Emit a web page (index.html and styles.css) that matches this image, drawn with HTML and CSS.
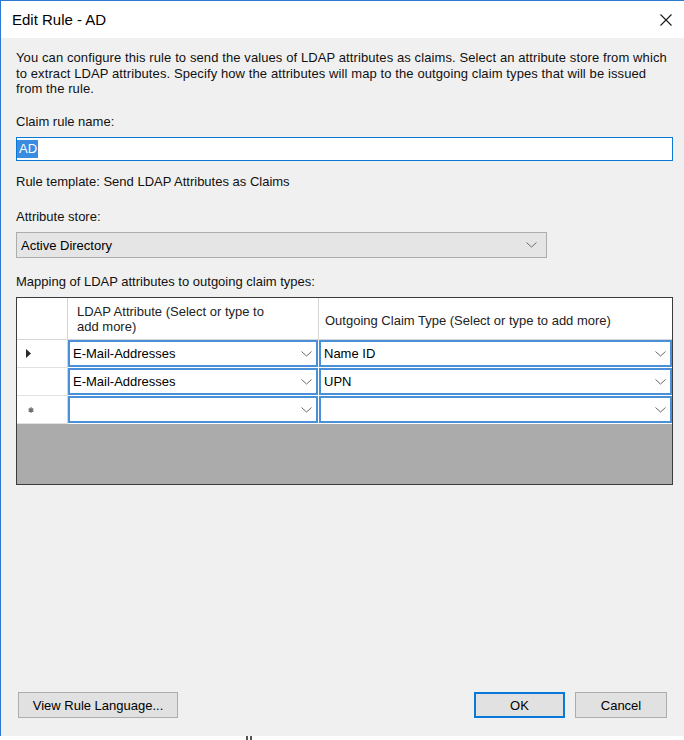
FILE: index.html
```html
<!DOCTYPE html>
<html>
<head>
<meta charset="utf-8">
<title>Edit Rule - AD</title>
<link rel="stylesheet" href="styles.css">
</head>
<body>
<div class="window">
  <div class="titlebar">
    <span class="title">Edit Rule - AD</span>
    <svg class="close" width="12" height="12" viewBox="0 0 12 12"><path d="M0.5 0.5 L11.5 11.5 M11.5 0.5 L0.5 11.5" stroke="#1a1a1a" stroke-width="1.1" fill="none"/></svg>
  </div>
  <div class="content">
    <p class="desc">You can configure this rule to send the values of LDAP attributes as claims. Select an attribute store from which<br>to extract LDAP attributes. Specify how the attributes will map to the outgoing claim types that will be issued<br>from the rule.</p>
    <div class="label l-name">Claim rule name:</div>
    <div class="textbox"><span class="sel">AD</span></div>
    <div class="label l-template">Rule template: Send LDAP Attributes as Claims</div>
    <div class="label l-store">Attribute store:</div>
    <div class="combo">
      <span class="combo-text">Active Directory</span>
      <svg class="chev" width="11" height="6" viewBox="0 0 11 6"><polyline points="0.5,0.5 5.5,5 10.5,0.5" stroke="#6a6a6a" stroke-width="1" fill="none"/></svg>
    </div>
    <div class="label l-map">Mapping of LDAP attributes to outgoing claim types:</div>
    <div class="grid">
      <div class="grid-head">
        <div class="rh"></div>
        <div class="ch ch1">LDAP Attribute (Select or type to<br>add more)</div>
        <div class="ch ch2">Outgoing Claim Type (Select or type to add more)</div>
      </div>
      <div class="grid-row">
        <div class="rh"><svg width="5" height="9" viewBox="0 0 5 9"><polygon points="0,0 5,4.5 0,9" fill="#2a2a2a"/></svg></div>
        <div class="cell c1"><span>E-Mail-Addresses</span><svg class="chev" width="11" height="6" viewBox="0 0 11 6"><polyline points="0.5,0.5 5.5,5 10.5,0.5" stroke="#6a6a6a" stroke-width="1" fill="none"/></svg></div>
        <div class="cell c2"><span>Name ID</span><svg class="chev" width="11" height="6" viewBox="0 0 11 6"><polyline points="0.5,0.5 5.5,5 10.5,0.5" stroke="#6a6a6a" stroke-width="1" fill="none"/></svg></div>
      </div>
      <div class="grid-row">
        <div class="rh"></div>
        <div class="cell c1"><span>E-Mail-Addresses</span><svg class="chev" width="11" height="6" viewBox="0 0 11 6"><polyline points="0.5,0.5 5.5,5 10.5,0.5" stroke="#6a6a6a" stroke-width="1" fill="none"/></svg></div>
        <div class="cell c2"><span>UPN</span><svg class="chev" width="11" height="6" viewBox="0 0 11 6"><polyline points="0.5,0.5 5.5,5 10.5,0.5" stroke="#6a6a6a" stroke-width="1" fill="none"/></svg></div>
      </div>
      <div class="grid-row">
        <div class="rh rh-new"><svg width="6" height="6" viewBox="0 0 6 6"><path d="M3 0.3 V5.7 M0.6 1.6 L5.4 4.4 M5.4 1.6 L0.6 4.4" stroke="#6e6e6e" stroke-width="1.4" fill="none"/></svg></div>
        <div class="cell c1"><span></span><svg class="chev" width="11" height="6" viewBox="0 0 11 6"><polyline points="0.5,0.5 5.5,5 10.5,0.5" stroke="#6a6a6a" stroke-width="1" fill="none"/></svg></div>
        <div class="cell c2"><span></span><svg class="chev" width="11" height="6" viewBox="0 0 11 6"><polyline points="0.5,0.5 5.5,5 10.5,0.5" stroke="#6a6a6a" stroke-width="1" fill="none"/></svg></div>
      </div>
    </div>
    <div class="footer">
      <button class="btn btn-view">View Rule Language...</button>
      <div class="spacer"></div>
      <button class="btn btn-ok">OK</button>
      <button class="btn btn-cancel">Cancel</button>
    </div>
  </div>
</div>
<div class="strip"><span class="mark"></span></div>
</body>
</html>
```

FILE: styles.css
```css
html, body {
  margin: 0;
  padding: 0;
  background: #ffffff;
}
body {
  width: 684px;
  height: 740px;
  overflow: hidden;
  font-family: "Liberation Sans", Arial, sans-serif;
  font-size: 13px;
  color: #000;
}
.window {
  height: 736px;
  box-sizing: border-box;
  border-top: 1px solid #2b7ad0;
  border-left: 1px solid #2b7ad0;
  display: flex;
  flex-direction: column;
}
.titlebar {
  flex: none;
  height: 37px;
  background: #fff;
  display: flex;
  align-items: center;
  padding: 0 12px 0 11px;
}
.title {
  flex: 1;
  font-size: 15px;
  color: #000;
  padding-bottom: 1px;
}
.close {
  display: block;
}
.content {
  flex: 1;
  background: #f0f0f0;
  padding: 12px 11px 18px 15px;
  display: flex;
  flex-direction: column;
  min-height: 0;
}
.desc {
  margin: 0;
  line-height: 15.5px;
  white-space: nowrap;
  letter-spacing: 0.1px;
  color: #111;
}
.label {
  line-height: 16px;
  white-space: nowrap;
  color: #111;
}
.l-name { margin-top: 17.5px; }
.l-template { margin-top: 13px; }
.l-store { margin-top: 19px; }
.l-map { margin-top: 16px; }
.textbox {
  margin-top: 7px;
  height: 24px;
  box-sizing: border-box;
  border: 1px solid #0a78d7;
  background: #fff;
  display: flex;
  align-items: center;
  padding-left: 0;
}
.sel {
  background: #3a8ce0;
  color: #fff;
  height: 18px;
  line-height: 18px;
  padding: 0 1px 0 2px;
}
.combo {
  margin-top: 7px;
  width: 531px;
  height: 26px;
  box-sizing: border-box;
  border: 1px solid #adadad;
  background: #e5e5e5;
  display: flex;
  align-items: center;
  padding: 0 9px 0 4px;
}
.combo-text {
  flex: 1;
}
.chev {
  display: block;
  flex: none;
}
.grid {
  margin-top: 7px;
  height: 188px;
  box-sizing: border-box;
  border: 1px solid #3c3c3c;
  background: #ababab;
  display: flex;
  flex-direction: column;
}
.grid-head {
  display: grid;
  grid-template-columns: 51px 251px 1fr;
  height: 42px;
  background: #fff;
}
.grid-head .rh {
  border-right: 1px solid #d6d6d6;
  border-bottom: 1px solid #d6d6d6;
}
.ch {
  display: flex;
  align-items: center;
  line-height: 15px;
  border-bottom: 1px solid #d6d6d6;
  color: #222;
}
.ch1 {
  padding-left: 9px;
  border-right: 1px solid #d6d6d6;
}
.ch2 {
  padding-left: 6px;
  padding-top: 3px;
  box-sizing: border-box;
}
.grid-row {
  display: grid;
  grid-template-columns: 51px 250px 1px 1fr;
  height: 28px;
  background: #fff;
}
.grid-row .rh {
  grid-column: 1;
  border-right: 1px solid #d6d6d6;
  border-bottom: 1px solid #e2e2e2;
  box-sizing: border-box;
  display: flex;
  align-items: center;
  padding-left: 9px;
}
.grid-row .rh-new {
  padding-left: 11px;
}
.cell {
  height: 27px;
  box-sizing: border-box;
  border: 2px solid #4a90d9;
  display: flex;
  align-items: center;
  padding: 0 4px 0 3px;
}
.cell span {
  flex: 1;
}
.c1 { grid-column: 2; }
.c2 { grid-column: 4; }
.footer {
  margin-top: auto;
  display: flex;
  align-items: center;
  padding: 0 6px 0 2px;
}
.spacer { flex: 1; }
.btn {
  height: 26px;
  box-sizing: border-box;
  background: #e1e1e1;
  border: 1px solid #adadad;
  font-family: "Liberation Sans", Arial, sans-serif;
  font-size: 13px;
  color: #000;
  padding: 0;
  margin: 0;
}
.btn-view { width: 160px; }
.btn-ok {
  width: 91px;
  border: 2px solid #0a78d7;
}
.btn-cancel {
  width: 92px;
  margin-left: 10px;
}
.strip {
  height: 4px;
  background: #fff;
  display: flex;
}
.mark {
  margin-left: 246px;
  width: 6px;
  height: 4px;
  border-left: 2px solid #555;
  border-right: 2px solid #555;
  box-sizing: border-box;
}
```
